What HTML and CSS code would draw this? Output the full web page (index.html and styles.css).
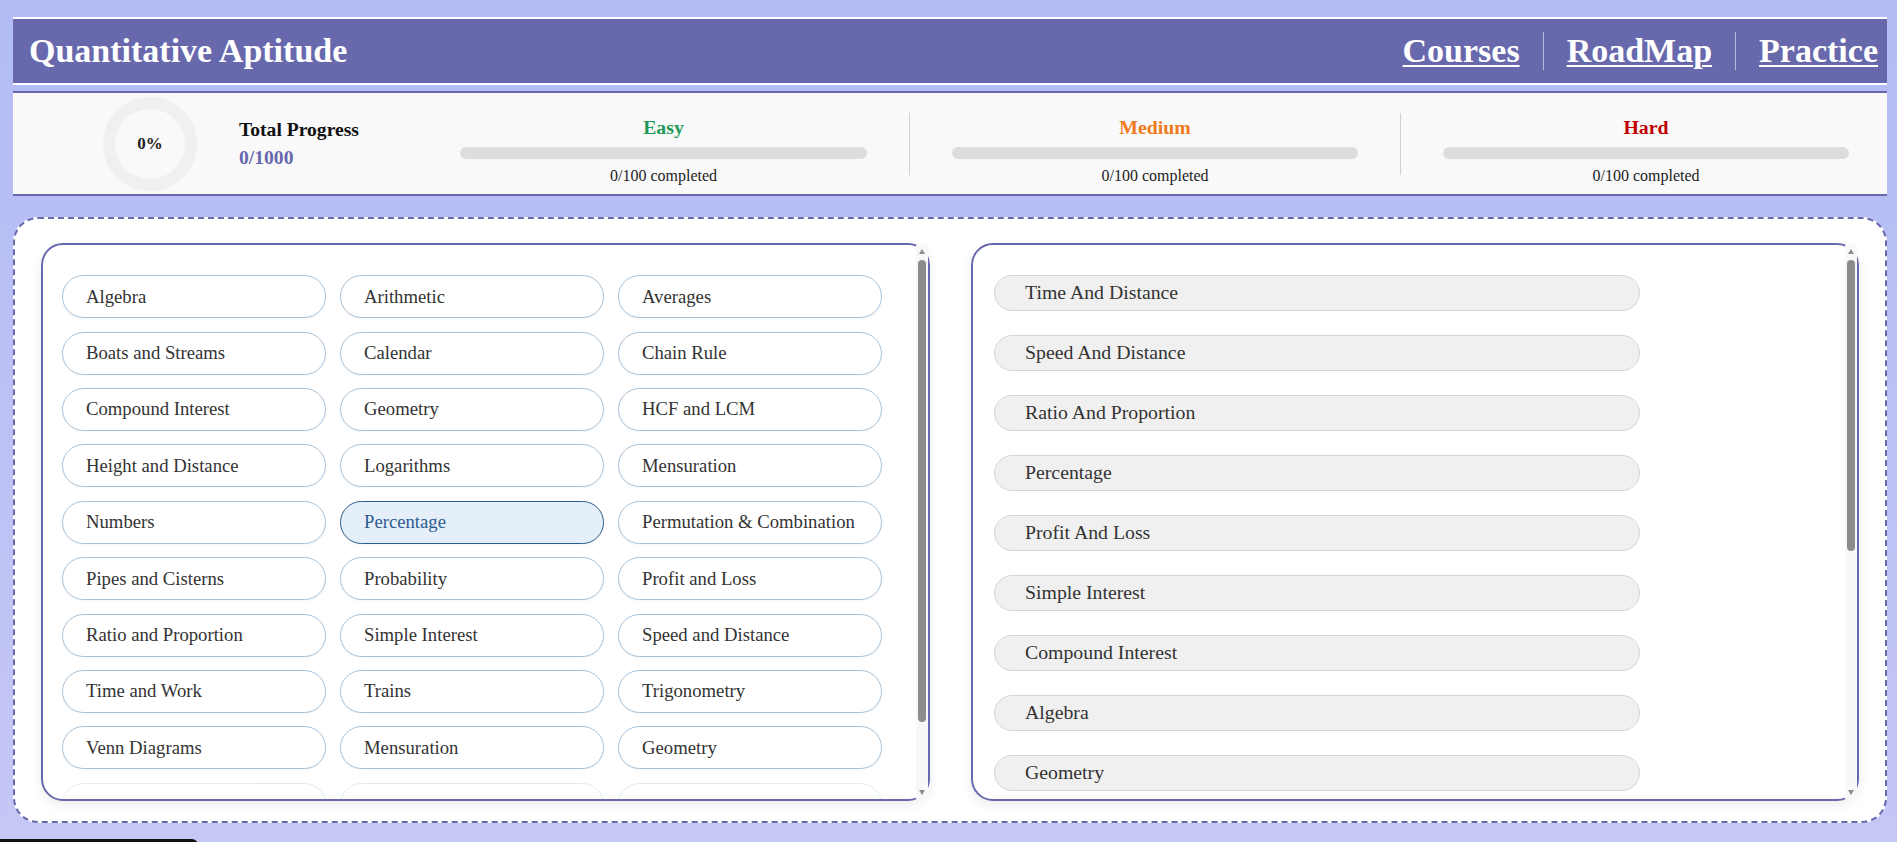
FILE: index.html
```html
<!DOCTYPE html>
<html lang="en">
<head>
<meta charset="utf-8">
<title>Quantitative Aptitude</title>
<link rel="stylesheet" href="styles.css">
</head>
<body>
<div class="page">
  <header class="topbar">
    <h1 class="brand">Quantitative Aptitude</h1>
    <nav class="nav">
      <a href="#" class="nav-link">Courses</a>
      <span class="nav-sep"></span>
      <a href="#" class="nav-link">RoadMap</a>
      <span class="nav-sep"></span>
      <a href="#" class="nav-link">Practice</a>
    </nav>
  </header>

  <section class="stats">
    <div class="overall">
      <div class="ring"><span class="ring-value">0%</span></div>
      <div class="overall-text">
        <div class="overall-title">Total Progress</div>
        <div class="overall-count">0/1000</div>
      </div>
    </div>
    <div class="level">
      <div class="level-title easy">Easy</div>
      <div class="bar"><div class="bar-fill" style="width:0%"></div></div>
      <div class="level-caption">0/100 completed</div>
    </div>
    <div class="level level-split">
      <div class="level-title medium">Medium</div>
      <div class="bar"><div class="bar-fill" style="width:0%"></div></div>
      <div class="level-caption">0/100 completed</div>
    </div>
    <div class="level level-split">
      <div class="level-title hard">Hard</div>
      <div class="bar"><div class="bar-fill" style="width:0%"></div></div>
      <div class="level-caption">0/100 completed</div>
    </div>
  </section>

  <main class="board">
    <section class="panel">
      <ul class="panel-body topic-grid">
        <li class="chip">Algebra</li>
        <li class="chip">Arithmetic</li>
        <li class="chip">Averages</li>
        <li class="chip">Boats and Streams</li>
        <li class="chip">Calendar</li>
        <li class="chip">Chain Rule</li>
        <li class="chip">Compound Interest</li>
        <li class="chip">Geometry</li>
        <li class="chip">HCF and LCM</li>
        <li class="chip">Height and Distance</li>
        <li class="chip">Logarithms</li>
        <li class="chip">Mensuration</li>
        <li class="chip">Numbers</li>
        <li class="chip chip-active">Percentage</li>
        <li class="chip">Permutation &amp; Combination</li>
        <li class="chip">Pipes and Cisterns</li>
        <li class="chip">Probability</li>
        <li class="chip">Profit and Loss</li>
        <li class="chip">Ratio and Proportion</li>
        <li class="chip">Simple Interest</li>
        <li class="chip">Speed and Distance</li>
        <li class="chip">Time and Work</li>
        <li class="chip">Trains</li>
        <li class="chip">Trigonometry</li>
        <li class="chip">Venn Diagrams</li>
        <li class="chip">Mensuration</li>
        <li class="chip">Geometry</li>
        <li class="chip chip-pending" aria-hidden="true"></li>
        <li class="chip chip-pending" aria-hidden="true"></li>
        <li class="chip chip-pending" aria-hidden="true"></li>
      </ul>
      <div class="scrollbar" aria-hidden="true">
        <span class="sb-arrow sb-up"></span>
        <span class="sb-thumb" style="height:462px"></span>
        <span class="sb-arrow sb-down"></span>
      </div>
    </section>

    <section class="panel">
      <ul class="panel-body topic-list">
        <li class="topic-item">Time And Distance</li>
        <li class="topic-item">Speed And Distance</li>
        <li class="topic-item">Ratio And Proportion</li>
        <li class="topic-item">Percentage</li>
        <li class="topic-item">Profit And Loss</li>
        <li class="topic-item">Simple Interest</li>
        <li class="topic-item">Compound Interest</li>
        <li class="topic-item">Algebra</li>
        <li class="topic-item">Geometry</li>
      </ul>
      <div class="scrollbar" aria-hidden="true">
        <span class="sb-arrow sb-up"></span>
        <span class="sb-thumb" style="height:291px"></span>
        <span class="sb-arrow sb-down"></span>
      </div>
    </section>
  </main>
</div>
<div class="edge-toast"></div>
</body>
</html>
```

FILE: styles.css
```css
* {
  box-sizing: border-box;
}

html,
body {
  margin: 0;
  padding: 0;
}

body {
  min-height: 100vh;
  background: linear-gradient(#b3bcf5, #c5c7f5);
  font-family: "Liberation Serif", "Times New Roman", serif;
  color: #333;
  overflow: hidden;
}

.page {
  padding: 17px 10px 0 13px;
}

/* ---------- header ---------- */
.topbar {
  display: flex;
  align-items: center;
  justify-content: space-between;
  height: 68px;
  padding: 0 9px 0 16px;
  background: #6868ad;
  border-top: 2px solid #ffffff;
  border-bottom: 2px solid #ffffff;
}

.brand {
  margin: 0;
  font-size: 34px;
  line-height: 1;
  font-weight: bold;
  color: #ffffff;
}

.nav {
  display: flex;
  align-items: center;
  gap: 23px;
}

.nav-link {
  font-size: 34px;
  font-weight: bold;
  line-height: 1;
  color: #ffffff;
  text-decoration: underline;
  text-decoration-thickness: 2px;
  text-underline-offset: 3px;
}

.nav-sep {
  width: 1px;
  height: 38px;
  background: rgba(255, 255, 255, 0.55);
}

/* ---------- stats ---------- */
.stats {
  display: flex;
  align-items: center;
  height: 105px;
  margin-top: 6px;
  background: #f9f9f9;
  border-top: 2px solid #6868ad;
  border-bottom: 2px solid #6868ad;
}

.overall {
  flex: 0 0 405px;
  display: flex;
  align-items: center;
  gap: 42px;
  padding-left: 90px;
}

.ring {
  width: 94px;
  height: 94px;
  border-radius: 50%;
  border: 12px solid #f0f0f0;
  display: grid;
  place-items: center;
}

.ring-value {
  font-size: 17px;
  font-weight: bold;
  color: #222;
}

.overall-title {
  font-size: 19.6px;
  line-height: 24px;
  font-weight: bold;
  color: #111;
}

.overall-count {
  margin-top: 4px;
  font-size: 19.6px;
  line-height: 24px;
  font-weight: bold;
  color: #6868ad;
}

.level {
  flex: 0 0 491px;
  height: 62px;
  padding: 2px 42px 0;
  display: flex;
  flex-direction: column;
  align-items: center;
}

.level > * {
  flex-shrink: 0;
}

.level-split {
  border-left: 1px solid #d0d0d0;
}

.level-title {
  font-size: 19.8px;
  line-height: 24px;
  font-weight: bold;
}

.easy {
  color: #1f9a5b;
}

.medium {
  color: #f07a1c;
}

.hard {
  color: #c00000;
}

.bar {
  width: 100%;
  height: 12px;
  margin-top: 8px;
  border-radius: 6px;
  background: #dddddd;
  overflow: hidden;
}

.bar-fill {
  height: 100%;
  background: #6868ad;
}

.level-caption {
  margin-top: 7px;
  font-size: 16px;
  line-height: 20px;
  color: #222;
}

/* ---------- board ---------- */
.board {
  display: flex;
  gap: 41px;
  margin-top: 20.5px;
  padding: 24px 26px 20px;
  background: #ffffff;
  border: 2px dashed #6868ad;
  border-radius: 25px;
}

.panel {
  position: relative;
  flex: 1 1 0;
  height: 558px;
  background: #ffffff;
  border: 2px solid #6868ad;
  border-radius: 22px;
  box-shadow: 0 4px 12px rgba(0, 0, 0, 0.08);
}

.panel-body {
  height: 100%;
  margin: 0;
  list-style: none;
  overflow: hidden;
  border-radius: 20px;
}

/* scrollbar drawn over the panel's right edge (not clipped by the corners) */
.scrollbar {
  position: absolute;
  top: 0;
  right: 0;
  bottom: 0;
  width: 12px;
  display: flex;
  flex-direction: column;
  align-items: center;
  background: #f8f8f8;
}

.sb-arrow {
  width: 0;
  height: 0;
  border-left: 3.5px solid transparent;
  border-right: 3.5px solid transparent;
}

.sb-up {
  margin-top: 4px;
  border-bottom: 5px solid #8c8c8c;
}

.sb-down {
  margin-top: auto;
  margin-bottom: 4px;
  border-top: 5px solid #8c8c8c;
}

.sb-thumb {
  width: 8px;
  margin-top: 6px;
  border-radius: 4px;
  background: #8c8c8c;
}

/* left: topic chips */
.topic-grid {
  display: grid;
  grid-template-columns: repeat(3, 264px);
  column-gap: 14px;
  row-gap: 13.4px;
  align-content: start;
  padding: 30.7px 12px 0 19px;
}

.chip {
  height: 43px;
  display: flex;
  align-items: center;
  padding: 0 23px;
  font-size: 18.7px;
  color: #333;
  background: #ffffff;
  border: 1px solid #a6c2d9;
  border-radius: 22px;
  box-shadow: 0 1px 3px rgba(0, 0, 0, 0.04);
  white-space: nowrap;
}

.chip-active {
  background: #e5eff9;
  border-color: #2d5d8f;
  color: #2d5d8f;
}

.chip-pending {
  opacity: 0.3;
}

/* right: topic list */
.topic-list {
  display: flex;
  flex-direction: column;
  gap: 23.6px;
  padding: 30.3px 12px 0 21.5px;
}

.topic-item {
  flex: 0 0 36.4px;
  width: 646px;
  display: flex;
  align-items: center;
  padding: 0 30px;
  font-size: 19.8px;
  color: #333;
  background: #f0f0f0;
  border: 1px solid #d4d4d4;
  border-radius: 18px;
  white-space: nowrap;
}

/* partially visible element at the bottom-left edge of the viewport */
.edge-toast {
  position: fixed;
  left: 0;
  bottom: -37px;
  width: 198px;
  height: 40px;
  background: #111111;
  border-radius: 0 6px 0 0;
}
```
